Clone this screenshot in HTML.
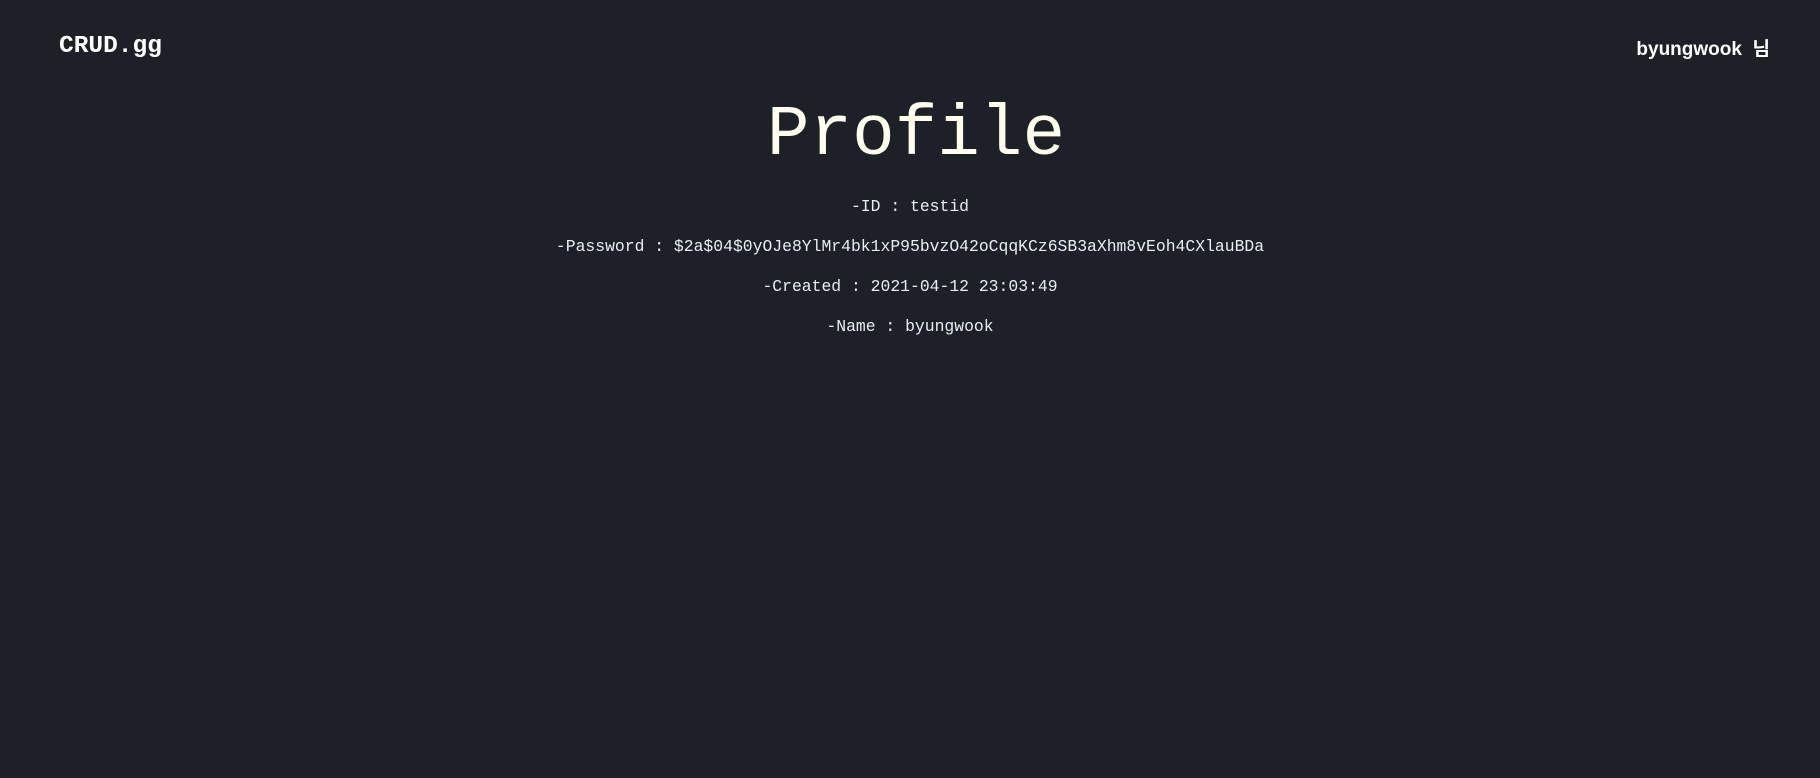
<!DOCTYPE html>
<html><head><meta charset="utf-8"><style>
html,body{margin:0;padding:0;background:#1d2027;width:1820px;height:778px;overflow:hidden}
.t{position:absolute;white-space:pre;line-height:1}
.logo{left:59px;top:33px;font:bold 24.5px "Liberation Mono",monospace;color:#fff}
.user{right:50px;top:34px;font:bold 19px "Liberation Sans","Noto Sans CJK KR",sans-serif;color:#fff}
.title{left:6px;width:1820px;text-align:center;top:96px;font:71px "Liberation Mono",monospace;color:#fffdee}
.l{left:0;width:1820px;text-align:center;font:16.4px "Liberation Mono",monospace;color:#e8eef2}
</style></head><body>
<div class="t logo">CRUD.gg</div>
<div class="t user">byungwook&nbsp; 님</div>
<div class="t title">Profile</div>
<div class="t l" style="top:197px">-ID : testid</div>
<div class="t l" style="top:237px">-Password : $2a$04$0yOJe8YlMr4bk1xP95bvzO42oCqqKCz6SB3aXhm8vEoh4CXlauBDa</div>
<div class="t l" style="top:277px">-Created : 2021-04-12 23:03:49</div>
<div class="t l" style="top:317px">-Name : byungwook</div>
</body></html>
